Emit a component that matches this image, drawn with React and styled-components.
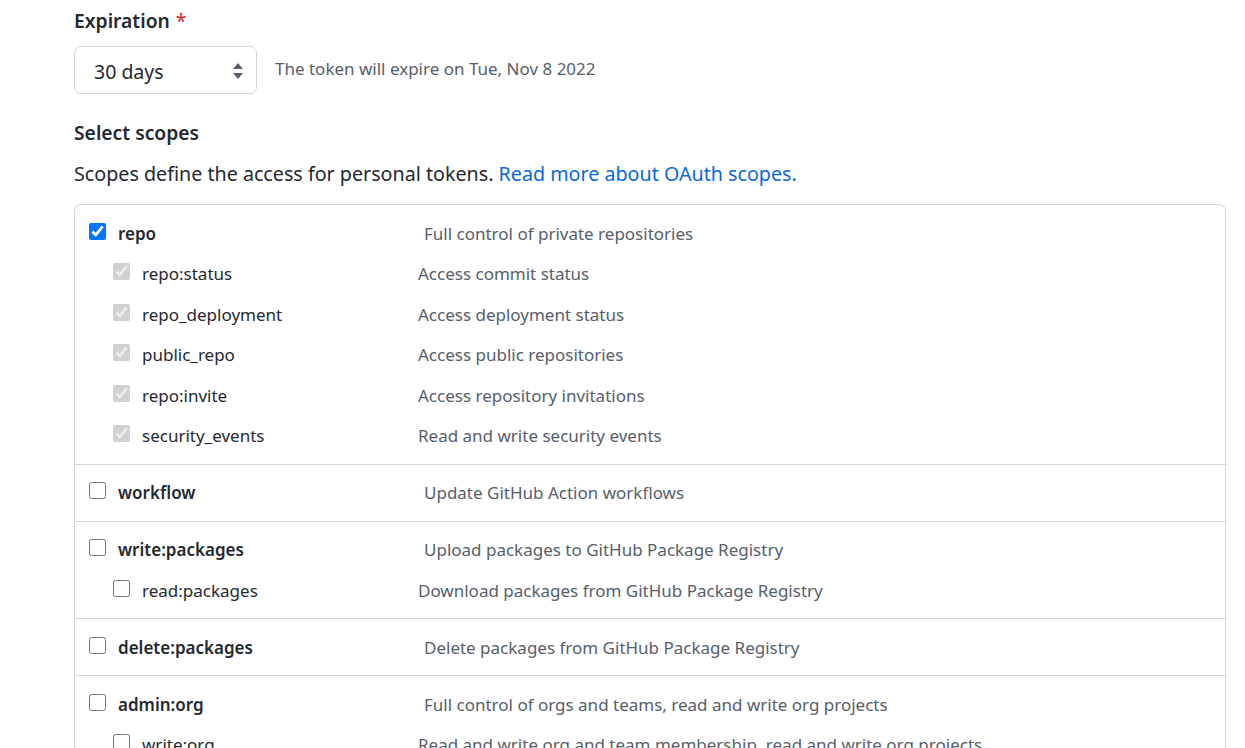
import React from "react"
import styled, { createGlobalStyle } from "styled-components"

const TEXT = "#24292f"
const MUTED = "#57606a"
const BORDER = "#d0d7de"
const LINK = "#0969da"
const DANGER = "#cf222e"

const GlobalStyle = createGlobalStyle`
    html, body {
        margin: 0;
        padding: 0;
        background: #ffffff;
        font-family: "Noto Sans", "Open Sans", "Liberation Sans", sans-serif;
        color: ${TEXT};
    }
`

const Page = styled.div`
    padding: 6px 19px 0 74px;
    height: 748px;
    overflow: hidden;
    box-sizing: border-box;
`

const Label = styled.div`
    font-size: 19.3px;
    font-weight: 600;
    line-height: 30px;
`

const Required = styled.span`
    color: ${DANGER};
    margin-left: 6px;
    font-weight: 400;
`

const ExpireRow = styled.div`
    display: flex;
    align-items: center;
    gap: 18px;
    margin-top: 10px;
`

const Select = styled.div`
    width: 183px;
    height: 48px;
    box-sizing: border-box;
    border: 1px solid ${BORDER};
    border-radius: 7px;
    display: flex;
    align-items: center;
    justify-content: space-between;
    padding: 2px 12px 0 19px;
    font-size: 19.5px;
    background: #fff;
`

const Note = styled.div`
    font-size: 17px;
    color: ${MUTED};
    margin-bottom: 3px;
`

const SectionTitle = styled(Label)`
    margin-top: 24px;
`

const Intro = styled.p`
    margin: 11px 0 0;
    font-size: 19.7px;
    line-height: 30px;
`

const Link = styled.a`
    color: ${LINK};
    text-decoration: none;
`

const ScopeBox = styled.div`
    margin-top: 15px;
    border: 1px solid ${BORDER};
    border-bottom: none;
    border-radius: 7px 7px 0 0;
`

const ScopeGroup = styled.div`
    padding: 7.75px 14px;
    & + & {
        border-top: 1px solid ${BORDER};
        margin-right: -2px;
    }
`

const Item = styled.label`
    display: flex;
    align-items: center;
    height: 40.5px;
    padding-left: ${({ $sub }) => ($sub ? "24px" : "0")};
`

const Box = styled.input`
    width: 17px;
    height: 17px;
    margin: 0 12px 4px 0;
    flex-shrink: 0;
    accent-color: #0075ff;
`

const Name = styled.span`
    width: ${({ $sub }) => ($sub ? "276px" : "306px")};
    flex-shrink: 0;
    font-size: 17px;
    font-weight: ${({ $sub }) => ($sub ? 400 : 600)};
    color: ${TEXT};
`

const Desc = styled.span`
    font-size: 17px;
    color: ${MUTED};
    white-space: nowrap;
`

const scopes = [
    {
        name: "repo", desc: "Full control of private repositories", checked: true,
        subs: [
            ["repo:status", "Access commit status"],
            ["repo_deployment", "Access deployment status"],
            ["public_repo", "Access public repositories"],
            ["repo:invite", "Access repository invitations"],
            ["security_events", "Read and write security events"],
        ],
    },
    { name: "workflow", desc: "Update GitHub Action workflows", subs: [] },
    {
        name: "write:packages", desc: "Upload packages to GitHub Package Registry",
        subs: [["read:packages", "Download packages from GitHub Package Registry"]],
    },
    { name: "delete:packages", desc: "Delete packages from GitHub Package Registry", subs: [] },
    {
        name: "admin:org", desc: "Full control of orgs and teams, read and write org projects",
        subs: [["write:org", "Read and write org and team membership, read and write org projects"]],
    },
]

function SortIcon() {
    return (
        <svg width="12" height="18" viewBox="0 0 12 18">
            <path d="M6 1 L11 7 H1 Z" fill={MUTED} />
            <path d="M6 17 L11 11 H1 Z" fill={MUTED} />
        </svg>
    )
}

export default function App() {
    return (
        <Page>
            <GlobalStyle />
            <Label>Expiration<Required>*</Required></Label>
            <ExpireRow>
                <Select>30 days<SortIcon /></Select>
                <Note>The token will expire on Tue, Nov 8 2022</Note>
            </ExpireRow>

            <SectionTitle>Select scopes</SectionTitle>
            <Intro>
                Scopes define the access for personal tokens. <Link href="#">Read more about OAuth scopes.</Link>
            </Intro>

            <ScopeBox>
                {scopes.map((s) => (
                    <ScopeGroup key={s.name}>
                        <Item>
                            <Box type="checkbox" defaultChecked={!!s.checked} />
                            <Name>{s.name}</Name>
                            <Desc>{s.desc}</Desc>
                        </Item>
                        {s.subs.map(([n, d]) => (
                            <Item $sub key={n}>
                                <Box type="checkbox" defaultChecked={!!s.checked} disabled={!!s.checked} />
                                <Name $sub>{n}</Name>
                                <Desc>{d}</Desc>
                            </Item>
                        ))}
                    </ScopeGroup>
                ))}
            </ScopeBox>
        </Page>
    )
}
